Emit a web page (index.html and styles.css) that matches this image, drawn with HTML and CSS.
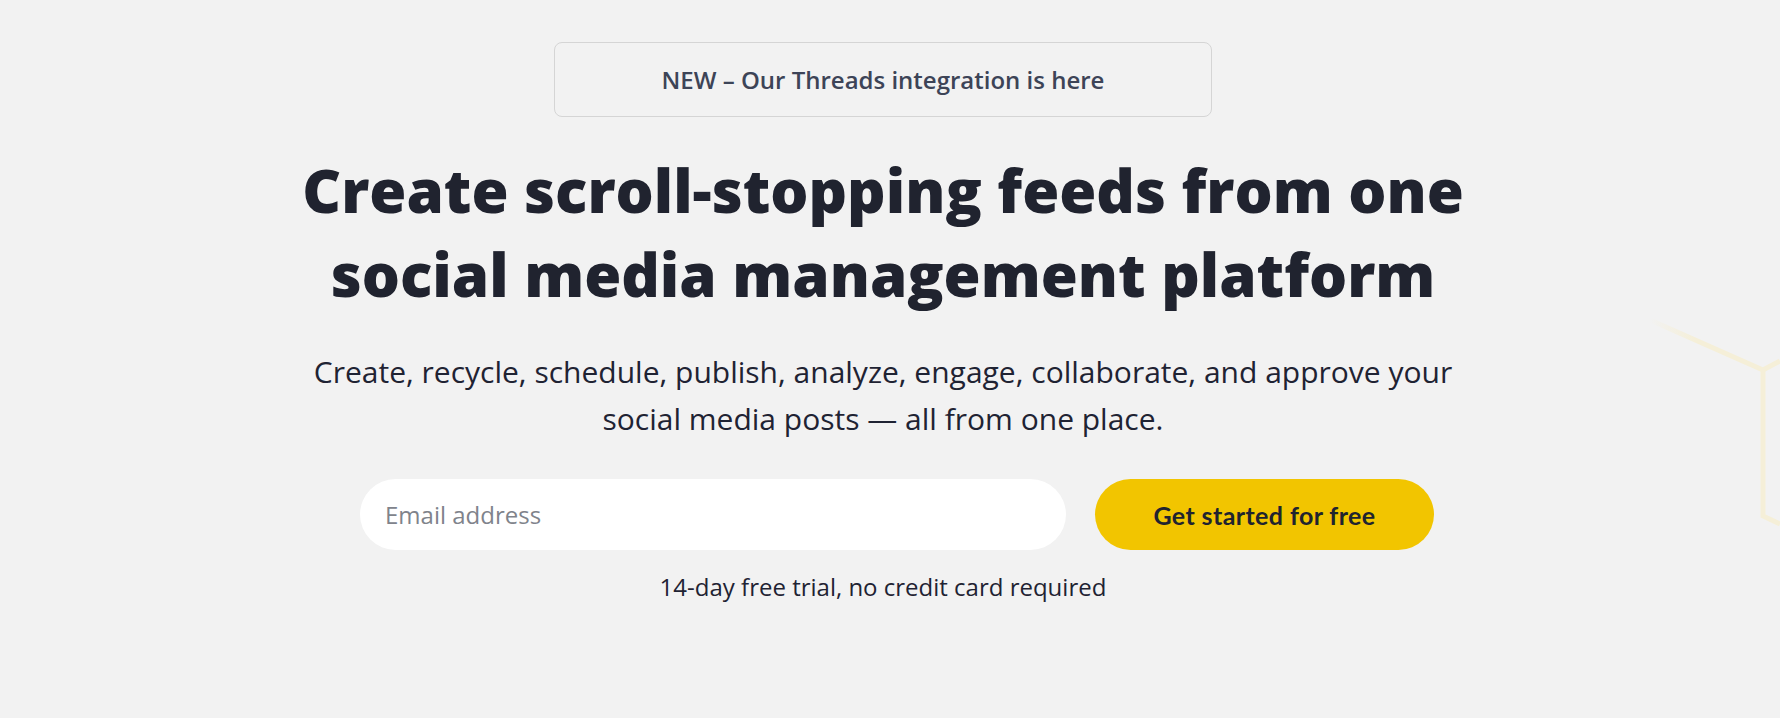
FILE: index.html
```html
<!DOCTYPE html>
<html lang="en">
<head>
<meta charset="utf-8">
<title>Social media management platform</title>
<link rel="stylesheet" href="styles.css">
</head>
<body>
<div class="page">
  <svg class="deco" width="140" height="260" viewBox="0 0 140 260" aria-hidden="true">
    <defs>
      <linearGradient id="fade" x1="0" y1="0" x2="1" y2="0">
        <stop offset="0" stop-color="#f5efd8" stop-opacity="0"/>
        <stop offset="0.35" stop-color="#f5efd8" stop-opacity="1"/>
      </linearGradient>
    </defs>
    <polyline points="10,30 123,80 140,71" fill="none" stroke="url(#fade)" stroke-width="5"/>
    <polyline points="123,80 123,226 140,234" fill="none" stroke="#f5efd8" stroke-width="5"/>
  </svg>
  <main class="hero">
    <a class="badge" href="#">NEW – Our Threads integration is here</a>
    <h1 class="title">Create scroll-stopping feeds from one<br>social media management platform</h1>
    <p class="lead">Create, recycle, schedule, publish, analyze, engage, collaborate, and approve your<br>social media posts — all from one place.</p>
    <form class="signup">
      <input class="email" type="email" placeholder="Email address">
      <button class="cta" type="button">Get started for free</button>
    </form>
    <p class="note">14-day free trial, no credit card required</p>
  </main>
</div>
</body>
</html>
```

FILE: styles.css
```css
html, body {
  margin: 0;
  padding: 0;
  background: #f2f2f2;
}
body {
  font-family: "Open Sans", "Liberation Sans", sans-serif;
  color: #1f2333;
}
.page {
  position: relative;
  height: 718px;
  overflow: hidden;
  padding-right: 14px;
}
.deco {
  position: absolute;
  right: 0;
  top: 290px;
}
.hero {
  display: flex;
  flex-direction: column;
  align-items: center;
  padding-top: 42px;
}
.badge {
  box-sizing: border-box;
  width: 658px;
  height: 75px;
  display: flex;
  align-items: center;
  justify-content: center;
  border: 1px solid #d5d5d5;
  border-radius: 8px;
  font-size: 24px;
  font-weight: 600;
  color: #3d4457;
  text-decoration: none;
}
.title {
  margin: 31px 0 0;
  font-size: 60px;
  line-height: 84px;
  font-weight: 800;
  text-align: center;
  color: #20232f;
}
.lead {
  margin: 32px 0 0;
  font-size: 30px;
  line-height: 47px;
  text-align: center;
}
.signup {
  display: flex;
  gap: 29px;
  margin: 37px 0 0 28px;
}
.email {
  box-sizing: border-box;
  width: 706px;
  height: 71px;
  border: none;
  border-radius: 36px;
  background: #fff;
  padding: 0 25px;
  font-family: "Open Sans", sans-serif;
  font-size: 24px;
  color: #1f2333;
  outline: none;
}
.email::placeholder {
  color: #80838b;
}
.cta {
  width: 339px;
  height: 71px;
  border: none;
  border-radius: 36px;
  background: #f2c500;
  font-family: "Lato", "Open Sans", sans-serif;
  font-weight: 700;
  font-size: 25px;
  letter-spacing: 0.4px;
  color: #20232f;
}
.note {
  margin: 20px 0 0;
  font-size: 24px;
  color: #1f2333;
}
```
